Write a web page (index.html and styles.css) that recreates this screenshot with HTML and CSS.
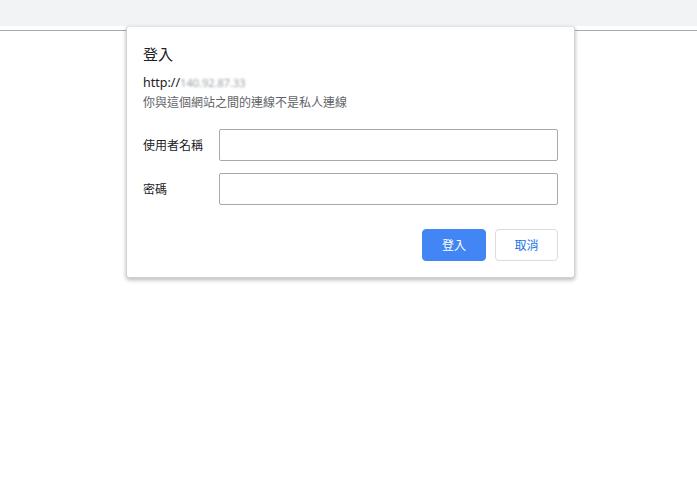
FILE: index.html
```html
<!DOCTYPE html>
<html lang="zh-Hant">
<head>
<meta charset="utf-8">
<title>登入</title>
<link rel="stylesheet" href="styles.css">
</head>
<body>
<div class="toolbar"></div>
<div class="gap"></div>
<div class="divider"></div>
<div class="dialog">
  <div class="title">登入</div>
  <div class="origin">http://<span class="blur">140.92.87.33</span></div>
  <div class="note">你與這個網站之間的連線不是私人連線</div>
  <div class="fields">
    <label class="row"><span class="label">使用者名稱</span><input class="field" type="text"></label>
    <label class="row"><span class="label">密碼</span><input class="field" type="password"></label>
  </div>
  <div class="actions">
    <button class="btn primary">登入</button>
    <button class="btn secondary">取消</button>
  </div>
</div>
</body>
</html>
```
FILE: styles.css
```css
html, body {
  margin: 0;
  padding: 0;
  background: #ffffff;
  font-family: "Noto Sans", "Noto Sans CJK TC", sans-serif;
}
.toolbar {
  height: 26px;
  background: #f1f3f4;
}
.gap {
  height: 4px;
}
.divider {
  height: 1px;
  background: #a9a9a9;
}
.dialog {
  position: absolute;
  left: 126px;
  top: 26px;
  width: 415px;
  padding: 16px;
  background: #fff;
  border: 1px solid rgba(0, 0, 0, 0.18);
  border-top-color: rgba(0, 0, 0, 0.1);
  border-radius: 3px;
  box-shadow: 0 2px 4px rgba(0, 0, 0, 0.28);
  display: flex;
  flex-direction: column;
}
.title {
  font-size: 15px;
  line-height: 22px;
  color: #202124;
  margin-bottom: 8px;
}
.origin {
  font-size: 12.5px;
  line-height: 20px;
  color: #202124;
}
.blur {
  color: #9aa0a6;
  filter: blur(1.2px);
  font-size: 11px;
}
.note {
  font-size: 12px;
  line-height: 20px;
  color: #5f6368;
}
.fields {
  margin-top: 16px;
  display: flex;
  flex-direction: column;
  gap: 12px;
}
.row {
  display: flex;
  align-items: center;
}
.label {
  width: 76px;
  flex: none;
  font-size: 12px;
  color: #202124;
}
.field {
  flex: 1;
  height: 32px;
  box-sizing: border-box;
  margin: 0;
  border: 1px solid #a9a9a9;
  border-radius: 2px;
  background: #fff;
  outline: none;
}
.actions {
  margin-top: 24px;
  display: flex;
  justify-content: flex-end;
  gap: 9px;
}
.btn {
  height: 32px;
  box-sizing: border-box;
  border-radius: 4px;
  font-family: "Noto Sans", "Noto Sans CJK TC", sans-serif;
  font-size: 12px;
  padding: 0;
  cursor: pointer;
}
.primary {
  width: 64px;
  background: #4285f4;
  border: 1px solid #4285f4;
  color: #fff;
}
.secondary {
  width: 63px;
  background: #fff;
  border: 1px solid #dadce0;
  color: #1a73e8;
}
```
